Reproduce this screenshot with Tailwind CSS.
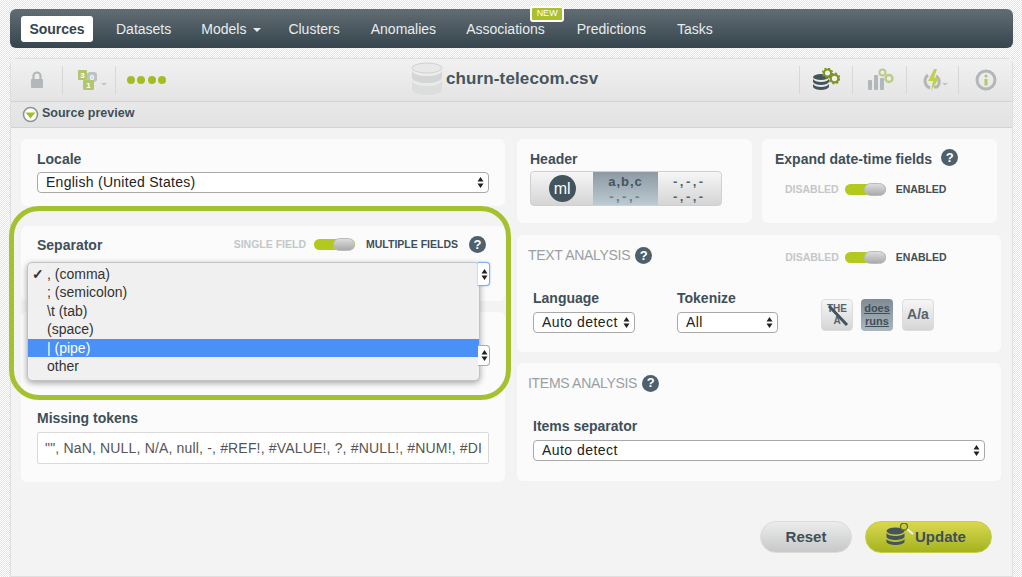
<!DOCTYPE html>
<html lang="en">
<head>
    <meta charset="UTF-8">
    <title>churn-telecom.csv</title>
    <script src="https://cdn.jsdelivr.net/npm/@tailwindcss/browser@4"></script>
</head>
<body class="relative h-[577px] w-[1022px] overflow-hidden bg-white bg-[repeating-conic-gradient(#e4e4e4_0_25%,#ffffff_0_50%)] bg-size-[2px_2px] font-['Liberation_Sans',Arial,sans-serif] text-[#3f4f59]">
    <div class="pl-[10px] pr-[9px] pt-[9px]">
        <!-- top nav -->
        <nav class="flex h-[39px] items-center rounded-md bg-gradient-to-b from-[#626d73] to-[#36454e] pl-[11px] text-[14px] text-[#e9ecec]">
            <a class="flex h-[26px] w-[72px] items-center justify-center rounded-[3px] bg-white pt-[2px] font-bold text-[#36454e]">Sources</a>
            <a class="ml-[23px] pt-[2px]">Datasets</a>
            <a class="ml-[30px] flex items-center pt-[2px]">Models<span class="ml-[7px] h-0 w-0 border-x-[4.5px] border-t-[4px] border-x-transparent border-t-[#e9ecec]"></span></a>
            <a class="ml-[27px] pt-[2px]">Clusters</a>
            <a class="ml-[31px] pt-[2px]">Anomalies</a>
            <a class="relative ml-[30px] pt-[2px]">Associations
                <span class="absolute left-[64px] top-[-11px] flex h-[16px] w-[34px] items-center justify-center rounded-[3px] border-2 border-white bg-[#aac02c] text-[9px] text-white">NEW</span>
            </a>
            <a class="ml-[32px] pt-[2px]">Predictions</a>
            <a class="ml-[31px] pt-[2px]">Tasks</a>
        </nav>

        <main class="mt-[10px] h-[519px] rounded-t-md border border-[#dfdfdf] bg-[#f3f3f3]">
            <!-- toolbar -->
            <div class="relative flex h-[43px] items-center bg-gradient-to-b from-[#f1f1f1] to-[#e4e4e4] border-b border-[#d3d3d3]">
                <div class="flex h-[28px] w-[52px] items-center justify-center border-r border-[#d8d8d8]">
                    <svg width="14" height="18" viewBox="0 0 14 18"><path d="M3.500 8V5a3.500 3.500 0 0 1 7 0v3" fill="none" stroke="#b2b7b9" stroke-width="2.200"/><rect x="1" y="8" width="12" height="9" rx="1" fill="#b2b7b9"/></svg>
                </div>
                <div class="flex h-[28px] w-[53px] items-center justify-center border-r border-[#d8d8d8] pl-[8px]">
                    <svg width="32" height="24" viewBox="0 0 32 24"><rect x="1" y="2" width="9" height="10" rx="1" fill="#b4c66d"/><rect x="10" y="4" width="10" height="10" rx="3" fill="#bcc2c5"/><rect x="6" y="12" width="11" height="10" rx="1" fill="#b4c66d"/><text x="5.500" y="10" font-size="8" font-weight="700" text-anchor="middle" fill="#fff" font-family="Liberation Sans">3</text><text x="15" y="12" font-size="8" font-weight="700" text-anchor="middle" fill="#fff" font-family="Liberation Sans">0</text><text x="11.500" y="20" font-size="8" font-weight="700" text-anchor="middle" fill="#fff" font-family="Liberation Sans">1</text><path d="M24 15h6l-3 2.500z" fill="#bcc2c5"/></svg>
                </div>
                <div class="ml-[11px] flex gap-[2.330px]">
                    <span class="h-[8px] w-[8px] rounded-full bg-[#a5bd24]"></span><span class="h-[8px] w-[8px] rounded-full bg-[#a5bd24]"></span><span class="h-[8px] w-[8px] rounded-full bg-[#a5bd24]"></span><span class="h-[8px] w-[8px] rounded-full bg-[#a5bd24]"></span>
                </div>
                <div class="absolute left-[400px] top-[3px] flex h-[34px] items-center">
                    <svg width="32" height="34" viewBox="0 0 32 34"><ellipse cx="16" cy="6" rx="15" ry="5" fill="#e8e8e8" stroke="#cfd2d2"/><path d="M1 8c0 8 30 8 30 0v7c0 8-30 8-30 0z" fill="#d4d6d6"/><path d="M1 18c0 8 30 8 30 0v9c0 8-30 8-30 0z" fill="#dcdddd"/></svg>
                    <span class="ml-[3px] text-[17px] tracking-[0.12px] font-bold text-[#45555e]">churn-telecom.csv</span>
                </div>
                <div class="ml-auto flex h-[28px] items-center">
                    <div class="flex h-[28px] w-[53px] items-center justify-center border-l border-[#d8d8d8]">
                        <svg width="28" height="24" viewBox="0 0 28 24"><ellipse cx="9" cy="9" rx="8" ry="3" fill="#44545d"/><path d="M1 11c2 4 14 4 16 0v3c-2 4-14 4-16 0z" fill="#44545d"/><path d="M1 16c2 4 14 4 16 0v3c-2 4-14 4-16 0z" fill="#44545d"/><circle cx="15.500" cy="5" r="3.500" fill="#f1f1f1" stroke="#7d9422" stroke-width="2"/><circle cx="15.500" cy="5" r="4.800" fill="none" stroke="#7d9422" stroke-width="1.500" stroke-dasharray="2 1.770"/><circle cx="22.500" cy="10.500" r="3.800" fill="#f1f1f1" stroke="#7d9422" stroke-width="2.200"/><circle cx="22.500" cy="10.500" r="5.300" fill="none" stroke="#7d9422" stroke-width="1.500" stroke-dasharray="2 2.160"/></svg>
                    </div>
                    <div class="flex h-[28px] w-[54px] items-center justify-center border-l border-[#d8d8d8]">
                        <svg width="28" height="24" viewBox="0 0 28 24"><rect x="2" y="12" width="4" height="10" rx="1" fill="#b2b7b9"/><rect x="8" y="7" width="4" height="15" rx="1" fill="#b2b7b9"/><rect x="14" y="10" width="4" height="12" rx="1" fill="#b2b7b9"/><circle cx="16.500" cy="4.500" r="3" fill="#ececec" stroke="#bccb86" stroke-width="2"/><circle cx="23" cy="10.500" r="3.500" fill="#ececec" stroke="#bccb86" stroke-width="2.500"/></svg>
                    </div>
                    <div class="flex h-[28px] w-[52px] items-center justify-center border-l border-[#d8d8d8]">
                        <svg width="32" height="24" viewBox="0 0 32 24"><path d="M11 7a7.500 7.500 0 0 0 2 13" fill="none" stroke="#b2b7b9" stroke-width="3"/><path d="M19 8a7 7 0 0 1 1 11h-3" fill="none" stroke="#b2b7b9" stroke-width="3"/><path d="M17 1l-6 12h5l-2 10 8-13h-5l3-9z" fill="#c3d04f"/><path d="M25 15h6l-3 2.500z" fill="#bcc2c5"/></svg>
                    </div>
                    <div class="flex h-[28px] w-[54px] items-center justify-center border-l border-[#d8d8d8]">
                        <svg width="22" height="22" viewBox="0 0 22 22"><circle cx="11" cy="11" r="9" fill="none" stroke="#b2b7b9" stroke-width="3"/><circle cx="11" cy="7" r="1.600" fill="#b8c46f"/><rect x="9.500" y="10" width="3" height="6.500" fill="#b8c46f"/></svg>
                    </div>
                </div>
            </div>

            <!-- source preview bar -->
            <div class="flex h-[26px] items-center border-b border-[#d3d3d3] bg-gradient-to-b from-[#e8e8e8] to-[#e2e2e2] pb-[3px] pl-[11px] text-[12.500px] font-bold">
                <svg class="mt-[2px]" width="17" height="17" viewBox="0 0 17 17"><circle cx="8.500" cy="8.500" r="7" fill="#fff" stroke="#8a9499" stroke-width="1.600"/><path d="M3.500 6.500h10l-5 6z" fill="#a5bd24"/></svg>
                <span class="ml-[3px]">Source preview</span>
            </div>

            <div class="flex gap-[12px] pl-[10px] pt-[11px]">
                <!-- left column -->
                <div class="flex w-[484px] flex-col">
                    <section class="h-[67px] rounded-md bg-[#fbfbfb] px-[16px] pt-[12px]">
                        <h3 class="text-[14px] leading-[16px] font-bold">Locale</h3>
                        <div class="mt-[5px] flex h-[21px] items-center justify-between rounded-[4px] border border-[#a9a9a9] bg-white pl-[8px] pr-[4px] text-[14px] tracking-[0.27px] text-[#222]">English (United States)
                            <svg width="7" height="13" viewBox="0 0 7 13"><path d="M3.500 1l3 4.500h-6zM3.500 12l3-4.500h-6z" fill="#222"/></svg>
                        </div>
                    </section>
                    <section class="mt-[20px] h-[75px] rounded-md bg-[#fbfbfb] pl-[16px] pr-[19px] pt-[10px]">
                        <div class="flex items-center">
                            <h3 class="text-[14px] leading-[16px] font-bold">Separator</h3>
                            <span class="ml-auto text-[10.500px] font-bold text-[#c4c7c9]">SINGLE FIELD</span>
                            <span class="relative ml-[8px] h-[11px] w-[41px] rounded-full bg-[#b3c91f]"><span class="absolute right-0 top-[-1px] h-[13px] w-[22px] rounded-full border border-[#bbb] bg-gradient-to-b from-[#ddd] to-[#aaa]"></span></span>
                            <span class="ml-[11px] text-[10.500px] font-bold">MULTIPLE FIELDS</span>
                            <span class="ml-[11px] flex h-[17px] w-[17px] items-center justify-center rounded-full bg-[#4d606c] text-[13px] font-bold text-white">?</span>
                        </div>
                    </section>
                    <section class="mt-[11px] h-[170px] rounded-md bg-[#fbfbfb] px-[16px] pt-[98px]">
                        <h3 class="text-[14px] leading-[16px] font-bold">Missing tokens</h3>
                        <div class="mt-[6px] flex h-[32px] items-center overflow-hidden whitespace-nowrap rounded-[2px] border border-[#d9d9d9] bg-white pl-[7px] text-[14px] tracking-[0.17px] text-[#555]">"", NaN, NULL, N/A, null, -, #REF!, #VALUE!, ?, #NULL!, #NUM!, #DI</div>
                    </section>
                </div>

                <!-- right column -->
                <div class="flex w-[484px] flex-col">
                    <div class="flex gap-[10px]">
                        <section class="h-[84px] w-[235px] rounded-md bg-[#fbfbfb] px-[13px] pt-[12px]">
                            <h3 class="text-[14px] leading-[16px] font-bold">Header</h3>
                            <div class="mt-[4px] flex h-[35px] w-[192px] overflow-hidden rounded-[4px] border border-[#d0d0d0] bg-gradient-to-b from-[#f6f6f6] to-[#d5d5d5]">
                                <div class="flex w-[63px] items-center justify-center">
                                    <span class="flex h-[27px] w-[27px] items-center justify-center rounded-full bg-[#44545d] text-[16px] text-white">ml</span>
                                </div>
                                <div class="flex w-[65px] flex-col items-center justify-center bg-gradient-to-b from-[#8d9aa3] to-[#bccad2] text-[13px] leading-[15px] tracking-[1px] font-bold text-[#44545d]">a,b,c<span class="tracking-[2.500px] text-[#6d7b84]">-,-,-</span></div>
                                <div class="flex w-[64px] flex-col items-center justify-center text-[13px] leading-[15px] tracking-[2.500px] font-bold text-[#55646d]">-,-,-<span>-,-,-</span></div>
                            </div>
                        </section>
                        <section class="h-[84px] w-[235px] rounded-md bg-[#fbfbfb] px-[13px] pt-[12px]">
                            <div class="flex h-[16px] items-center">
                                <h3 class="text-[14px] leading-[16px] font-bold">Expand date-time fields</h3>
                                <span class="mb-[3px] ml-[9px] flex h-[17px] w-[17px] items-center justify-center rounded-full bg-[#4d606c] text-[13px] font-bold text-white">?</span>
                            </div>
                            <div class="ml-[10px] mt-[15px] flex items-center">
                                <span class="text-[10.500px] font-bold text-[#c4c7c9]">DISABLED</span>
                                <span class="relative ml-[6px] h-[11px] w-[41px] rounded-full bg-[#b3c91f]"><span class="absolute right-0 top-[-1px] h-[13px] w-[22px] rounded-full border border-[#bbb] bg-gradient-to-b from-[#ddd] to-[#aaa]"></span></span>
                                <span class="ml-[10px] text-[10.500px] font-bold">ENABLED</span>
                            </div>
                        </section>
                    </div>
                    <section class="mt-[12px] h-[117px] rounded-md bg-[#fbfbfb] pl-[11px] pt-[10px]">
                        <div class="flex items-center">
                            <h3 class="text-[14px] leading-[20px] tracking-[-0.3px] text-[#9a9fa3]">TEXT ANALYSIS</h3>
                            <span class="ml-[5px] flex h-[17px] w-[17px] items-center justify-center rounded-full bg-[#4d606c] text-[13px] font-bold text-white">?</span>
                            <div class="ml-[133px] mt-[5px] flex items-center">
                                <span class="text-[10.500px] font-bold text-[#c4c7c9]">DISABLED</span>
                                <span class="relative ml-[6px] h-[11px] w-[41px] rounded-full bg-[#b3c91f]"><span class="absolute right-0 top-[-1px] h-[13px] w-[22px] rounded-full border border-[#bbb] bg-gradient-to-b from-[#ddd] to-[#aaa]"></span></span>
                                <span class="ml-[10px] text-[10.500px] font-bold">ENABLED</span>
                            </div>
                        </div>
                        <div class="ml-[5px] mt-[24px] flex">
                            <div class="w-[144px]">
                                <h3 class="text-[14px] leading-[16px] font-bold">Language</h3>
                                <div class="mt-[6px] flex h-[21px] w-[102px] items-center justify-between rounded-[4px] border border-[#a9a9a9] bg-white pl-[8px] pr-[4px] text-[14px] tracking-[0.45px] text-[#222]">Auto detect
                                    <svg width="7" height="13" viewBox="0 0 7 13"><path d="M3.500 1l3 4.500h-6zM3.500 12l3-4.500h-6z" fill="#222"/></svg>
                                </div>
                            </div>
                            <div class="w-[144px]">
                                <h3 class="text-[14px] leading-[16px] font-bold">Tokenize</h3>
                                <div class="mt-[6px] flex h-[21px] w-[101px] items-center justify-between rounded-[4px] border border-[#a9a9a9] bg-white pl-[8px] pr-[4px] text-[14px] tracking-[0.45px] text-[#222]">All
                                    <svg width="7" height="13" viewBox="0 0 7 13"><path d="M3.500 1l3 4.500h-6zM3.500 12l3-4.500h-6z" fill="#222"/></svg>
                                </div>
                            </div>
                            <div class="mt-[9px] flex h-[32px] gap-[8px]">
                                <span class="relative flex h-[32px] w-[32px] flex-col items-center justify-center rounded-[4px] border border-[#ddd] bg-gradient-to-b from-[#f6f6f6] to-[#d5d5d5] text-[10px] leading-[12px] font-bold text-[#55646d]">THE<span>A</span>
                                    <svg class="absolute left-[3px] top-[3px]" width="25" height="25" viewBox="0 0 25 25"><path d="M4 3l18 19" stroke="#44545d" stroke-width="3"/></svg>
                                </span>
                                <span class="flex h-[32px] w-[32px] flex-col items-center justify-center rounded-[4px] bg-gradient-to-b from-[#7f8c95] to-[#aab7bf] text-[11px] leading-[13px] font-bold text-[#3f4f59] underline">does<span>runs</span></span>
                                <span class="ml-[1px] flex h-[32px] w-[32px] items-center justify-center rounded-[4px] border border-[#ddd] bg-gradient-to-b from-[#f6f6f6] to-[#d5d5d5] text-[14px] font-bold text-[#55646d]">A/a</span>
                            </div>
                        </div>
                    </section>
                    <section class="mt-[11px] h-[118px] rounded-md bg-[#fbfbfb] pl-[11px] pt-[10px]">
                        <div class="flex items-center">
                            <h3 class="text-[14px] leading-[20px] tracking-[-0.3px] text-[#9a9fa3]">ITEMS ANALYSIS</h3>
                            <span class="ml-[5px] flex h-[17px] w-[17px] items-center justify-center rounded-full bg-[#4d606c] text-[13px] font-bold text-white">?</span>
                        </div>
                        <div class="ml-[5px] mr-[16px] mt-[25px]">
                            <h3 class="text-[14px] leading-[16px] font-bold">Items separator</h3>
                            <div class="mt-[6px] flex h-[21px] items-center justify-between rounded-[4px] border border-[#a9a9a9] bg-white pl-[8px] pr-[4px] text-[14px] tracking-[0.45px] text-[#222]">Auto detect
                                <svg width="7" height="13" viewBox="0 0 7 13"><path d="M3.500 1l3 4.500h-6zM3.500 12l3-4.500h-6z" fill="#222"/></svg>
                            </div>
                        </div>
                    </section>
                    <div class="mr-[9px] mt-[40px] flex justify-end gap-[13px] text-[15px] font-bold">
                        <button class="h-[32px] w-[92px] rounded-full border border-[#dcdcd4] bg-gradient-to-b from-[#ececec] to-[#c6c8c9]">Reset</button>
                        <button class="flex h-[32px] w-[127px] items-center rounded-full border border-[#c5ce4a] bg-gradient-to-b from-[#d9d84e] to-[#a5b31b] pl-[20px]">
                            <svg class="mt-[-2px]" width="29" height="26" viewBox="0 0 29 26"><ellipse cx="9.500" cy="8" rx="9" ry="3.500" fill="#44545d"/><path d="M.5 10c2 4 16 4 18 0v4c-2 4-16 4-18 0zM.5 16c2 4 16 4 18 0v3c-2 4-16 4-18 0z" fill="#44545d"/><path d="M21 6l6 5" stroke="#f0f0f0" stroke-width="2"/><circle cx="18" cy="3.500" r="3.500" fill="#c6cc3a" stroke="#5d6e2a" stroke-width="1.300"/></svg>
                            <span>Update</span>
                        </button>
                    </div>
                </div>
            </div>
        </main>
    </div>

    <!-- open select menu -->
    <div class="absolute left-[9px] top-[206px] h-[194px] w-[502px] rounded-[30px] border-[5px] border-[#a4c230]"></div>
    <div class="absolute left-[27px] top-[262px] h-[119px] w-[453px] rounded-[5px] border border-[#c3c3c3] bg-[#f0f0f0] pt-[2px] text-[14px] leading-[18.400px] text-[#333] shadow-[0_2px_6px_rgba(0,0,0,0.35)]">
        <div class="relative pl-[19px]"><span class="absolute left-[4px] font-bold">✓</span>, (comma)</div>
        <div class="pl-[19px]">; (semicolon)</div>
        <div class="pl-[19px]">\t (tab)</div>
        <div class="pl-[19px]">(space)</div>
        <div class="bg-[#4a90f7] pl-[19px] text-white">| (pipe)</div>
        <div class="pl-[19px]">other</div>
    </div>
    <div class="absolute left-[478px] top-[262px] flex h-[24px] w-[12px] items-center justify-end rounded-r-[4px] border border-l-0 border-[#7eb0f0] bg-white pr-[1px] shadow-[0_0_2px_#7eb0f0]">
        <svg width="7" height="13" viewBox="0 0 7 13"><path d="M3.500 1l3 4.500h-6zM3.500 12l3-4.500h-6z" fill="#222"/></svg>
    </div>
    <div class="absolute left-[478px] top-[345px] flex h-[21px] w-[12px] items-center justify-end rounded-r-[4px] border border-l-0 border-[#a9a9a9] bg-white pr-[1px]">
        <svg width="7" height="13" viewBox="0 0 7 13"><path d="M3.500 1l3 4.500h-6zM3.500 12l3-4.500h-6z" fill="#222"/></svg>
    </div>
</body>
</html>
